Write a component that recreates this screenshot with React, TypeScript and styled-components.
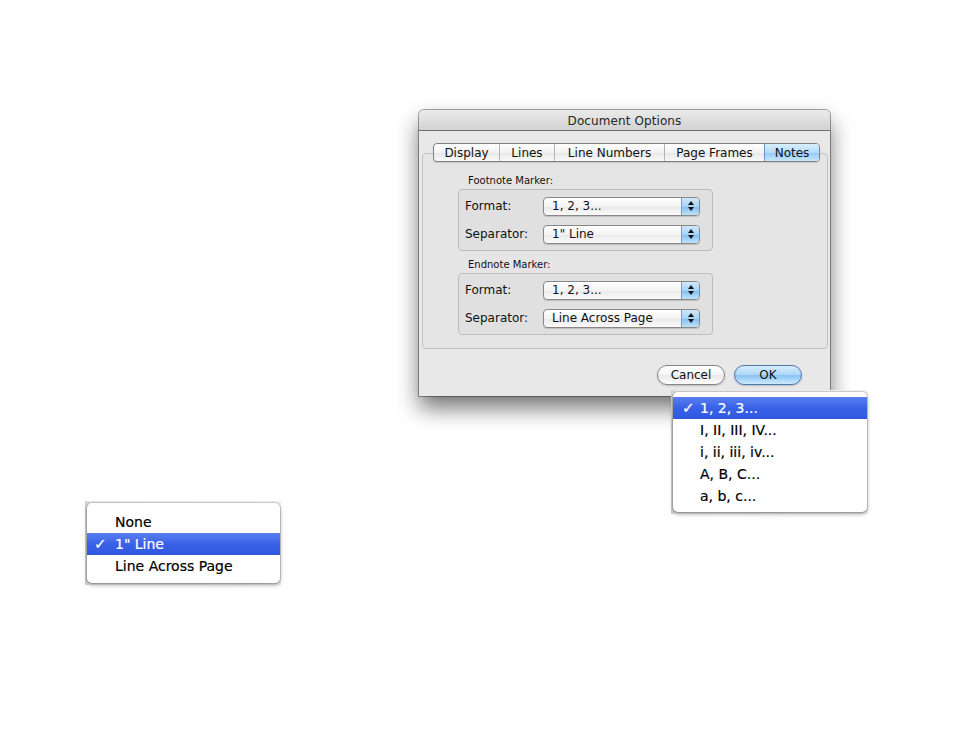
import React from "react";
import styled, { createGlobalStyle } from "styled-components";

const Global = createGlobalStyle`
  *, *::before, *::after { box-sizing: border-box; }
  html, body { margin: 0; padding: 0; background: #ffffff; }
  body { font-family: "DejaVu Sans", "Liberation Sans", sans-serif; color: #000; }
`;

const Page = styled.div`
  position: relative;
  width: 954px;
  height: 737px;
  overflow: hidden;
  background: #fff;
`;

const Window = styled.div`
  position: absolute;
  left: 419px;
  top: 110px;
  width: 411px;
  height: 286px;
  display: flex;
  flex-direction: column;
  background: #e8e8e8;
  border-radius: 5px 5px 0 0;
  box-shadow: 0 0 0 1px rgba(0,0,0,0.35), 0 12px 22px rgba(0,0,0,0.55);
  overflow: hidden;
`;

const TitleBar = styled.div`
  height: 21px;
  flex: 0 0 21px;
  display: flex;
  align-items: center;
  justify-content: center;
  padding-top: 1px;
  background: linear-gradient(#ebebeb, #d2d2d2);
  border-bottom: 1px solid #6f6f6f;
  font-size: 12px;
  color: #262626;
  letter-spacing: 0.1px;
`;

const Body = styled.div`
  flex: 1;
  display: flex;
  flex-direction: column;
  padding: 12px 2px 0 3px;
`;

const TabRow = styled.div`
  position: relative;
  z-index: 1;
  display: flex;
  justify-content: center;
  padding-left: 3px;
  margin-bottom: -9px;
`;

const Segments = styled.div`
  display: flex;
  height: 19px;
  border: 1px solid #7f7f7f;
  border-radius: 4px;
  overflow: hidden;
  background: linear-gradient(#ffffff, #f2f2f2 50%, #e6e6e6 51%, #fafafa);
  box-shadow: 0 1px 1px rgba(0,0,0,0.12);
`;

const Segment = styled.div<{ $w: number; $on?: boolean }>`
  width: ${(p) => p.$w}px;
  display: flex;
  align-items: center;
  justify-content: center;
  font-size: 12px;
  color: #111;
  border-left: 1px solid #b4b4b4;
  &:first-child { border-left: none; }
  background: ${(p) =>
    p.$on
      ? "linear-gradient(#d9eefd, #b4dcfa 50%, #92c9f5 51%, #c6e6fd)"
      : "transparent"};
  ${(p) => (p.$on ? "border-left-color: #6f93c6;" : "")}
`;

const Pane = styled.div`
  height: 196px;
  border: 1px solid #c3c3c3;
  border-radius: 4px;
  background: #e5e5e5;
  padding: 20px 0 0 35px;
  display: flex;
  flex-direction: column;
`;

const GroupLabel = styled.div`
  font-size: 10px;
  line-height: 14px;
  height: 14px;
  padding-left: 10px;
  color: #111;
`;

const GroupBox = styled.div`
  width: 255px;
  margin-top: 1px;
  border: 1px solid #bdbdbd;
  border-radius: 4px;
  background: #e0e0e0;
  padding: 6px 12px 6px 6px;
  display: flex;
  flex-direction: column;
  gap: 8px;
`;

const Spacer = styled.div<{ $h: number }>`
  height: ${(p) => p.$h}px;
  flex: 0 0 auto;
`;

const FieldRow = styled.div`
  display: flex;
  align-items: center;
  height: 20px;
`;

const FieldLabel = styled.div`
  width: 78px;
  font-size: 12px;
  color: #111;
`;

const Popup = styled.div`
  flex: 1;
  height: 19px;
  display: flex;
  border: 1px solid #878787;
  border-radius: 4px;
  overflow: hidden;
  background: linear-gradient(#ffffff, #f3f3f3 50%, #e9e9e9 51%, #fbfbfb);
  box-shadow: 0 1px 1px rgba(0,0,0,0.15);
`;

const PopupText = styled.div`
  flex: 1;
  display: flex;
  align-items: center;
  padding-left: 8px;
  font-size: 12px;
  color: #111;
`;

const Stepper = styled.div`
  width: 18px;
  display: flex;
  align-items: center;
  justify-content: center;
  border-left: 1px solid #7d9bc6;
  background: linear-gradient(#cfe8fc, #a6d3f8 50%, #7fbdf2 51%, #bfe2fc);
`;

const ButtonRow = styled.div`
  display: flex;
  justify-content: flex-end;
  gap: 9px;
  padding: 16px 26px 0 0;
`;

const PushButton = styled.div<{ $default?: boolean }>`
  width: 68px;
  height: 20px;
  display: flex;
  align-items: center;
  justify-content: center;
  font-size: 12px;
  color: #111;
  border-radius: 10px;
  border: 1px solid ${(p) => (p.$default ? "#4f78b0" : "#858585")};
  background: ${(p) =>
    p.$default
      ? "linear-gradient(#d6ecfd, #acd6f9 50%, #86c3f4 51%, #cdeafe)"
      : "linear-gradient(#ffffff, #f4f4f4 50%, #e8e8e8 51%, #fdfdfd)"};
  box-shadow: 0 1px 2px rgba(0,0,0,0.2);
`;

const MenuShot = styled.div<{ $left: number; $top: number; $w: number; $h: number }>`
  position: absolute;
  left: ${(p) => p.$left}px;
  top: ${(p) => p.$top}px;
  width: ${(p) => p.$w}px;
  height: ${(p) => p.$h}px;
  background: linear-gradient(90deg, #cfcfcf, #eaeaea 6px, #f2f2f2);
  display: flex;
  padding: 2px 1px 2px 2px;
`;

const Menu = styled.div<{ $pt: number }>`
  flex: 1;
  background: #ffffff;
  border-radius: 5px;
  box-shadow: 0 0 0 1px rgba(0,0,0,0.12), 0 2px 4px rgba(0,0,0,0.35);
  padding-top: ${(p) => p.$pt}px;
  display: flex;
  flex-direction: column;
`;

const MenuItem = styled.div<{ $on?: boolean; $indent: number }>`
  position: relative;
  height: 22px;
  flex: 0 0 22px;
  display: flex;
  align-items: center;
  padding-left: ${(p) => p.$indent}px;
  font-size: 14px;
  color: ${(p) => (p.$on ? "#fff" : "#000")};
  background: ${(p) => (p.$on ? "linear-gradient(#5a7ef0, #3961e6 50%, #2f57e2)" : "transparent")};
  white-space: nowrap;
  -webkit-text-stroke: 0.2px ${(p) => (p.$on ? "#fff" : "#000")};
`;

const Check = styled.span<{ $x: number }>`
  position: absolute;
  left: ${(p) => p.$x}px;
  font-size: 15px;
  font-weight: bold;
`;

const Arrows = () => (
  <svg width="8" height="12" viewBox="0 0 8 12">
    <path d="M4 1 L7 5 L1 5 Z" fill="#111" />
    <path d="M4 11 L7 7 L1 7 Z" fill="#111" />
  </svg>
);

const Field = ({ label, value }: { label: string; value: string }) => (
  <FieldRow>
    <FieldLabel>{label}</FieldLabel>
    <Popup>
      <PopupText>{value}</PopupText>
      <Stepper>
        <Arrows />
      </Stepper>
    </Popup>
  </FieldRow>
);

const tabs: { t: string; w: number; on?: boolean }[] = [
  { t: "Display", w: 65 },
  { t: "Lines", w: 55 },
  { t: "Line Numbers", w: 110 },
  { t: "Page Frames", w: 100 },
  { t: "Notes", w: 55, on: true },
];

const formats = ["1, 2, 3...", "I, II, III, IV...", "i, ii, iii, iv...", "A, B, C...", "a, b, c..."];
const separators = ["None", "1\" Line", "Line Across Page"];

export default function App() {
  return (
    <Page>
      <Global />
      <Window>
        <TitleBar>Document Options</TitleBar>
        <Body>
          <TabRow>
            <Segments>
              {tabs.map((x) => (
                <Segment key={x.t} $w={x.w} $on={x.on}>
                  {x.t}
                </Segment>
              ))}
            </Segments>
          </TabRow>
          <Pane>
            <GroupLabel>Footnote Marker:</GroupLabel>
            <GroupBox>
              <Field label="Format:" value="1, 2, 3..." />
              <Field label="Separator:" value={'1" Line'} />
            </GroupBox>
            <Spacer $h={7} />
            <GroupLabel>Endnote Marker:</GroupLabel>
            <GroupBox>
              <Field label="Format:" value="1, 2, 3..." />
              <Field label="Separator:" value="Line Across Page" />
            </GroupBox>
          </Pane>
          <ButtonRow>
            <PushButton>Cancel</PushButton>
            <PushButton $default>OK</PushButton>
          </ButtonRow>
        </Body>
      </Window>

      <MenuShot $left={671} $top={390} $w={197} $h={124}>
        <Menu $pt={5}>
          {formats.map((f, i) => (
            <MenuItem key={f} $on={i === 0} $indent={27}>
              {i === 0 && <Check $x={9}>✓</Check>}
              {f}
            </MenuItem>
          ))}
        </Menu>
      </MenuShot>

      <MenuShot $left={85} $top={501} $w={196} $h={84}>
        <Menu $pt={8}>
          {separators.map((s, i) => (
            <MenuItem key={s} $on={i === 1} $indent={28}>
              {i === 1 && <Check $x={7}>✓</Check>}
              {s}
            </MenuItem>
          ))}
        </Menu>
      </MenuShot>
    </Page>
  );
}
